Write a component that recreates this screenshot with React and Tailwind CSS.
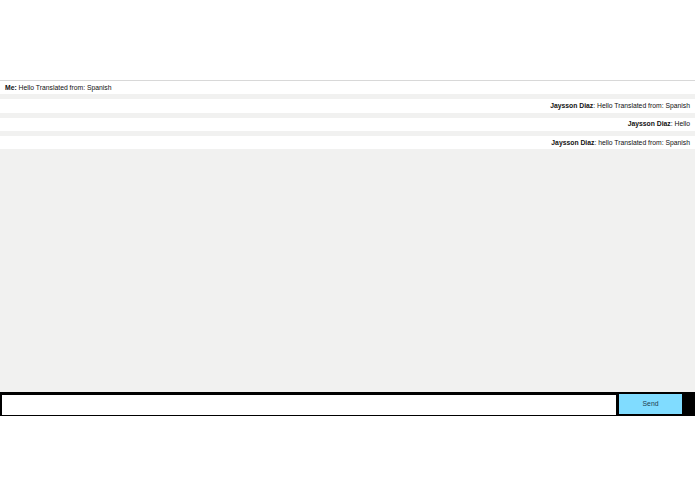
export default function App() {
  const messages = [
    { from: "Me:", text: " Hello Translated from: Spanish", mine: true },
    { from: "Jaysson Diaz", text: ": Hello Translated from: Spanish" },
    { from: "Jaysson Diaz", text: ": Hello" },
    { from: "Jaysson Diaz", text: ": hello Translated from: Spanish" },
  ];

  return (
    <div className="w-[695px] h-[494px] bg-white flex flex-col font-['Liberation_Sans',Arial,sans-serif] text-[#111]">
      <div className="h-[80px] shrink-0" />
      <div className="h-[312px] shrink-0 bg-[#f1f1f0] border-t border-[#d8d8d8] flex flex-col">
        {messages.map((m, i) => (
          <div
            key={i}
            className={
              "h-[13.33px] mb-[5px] pt-[1px] bg-white flex items-center text-[6.8px] leading-none px-[5px] " +
              (m.mine ? "justify-start" : "justify-end")
            }
          >
            <span>
              <b>{m.from}</b>
              {m.text}
            </span>
          </div>
        ))}
      </div>
      <div className="h-[24px] shrink-0 bg-black flex items-center">
        <input className="ml-[2px] mt-[1px] w-[614px] h-[20px] bg-white outline-none text-[8px] px-1" />
        <button className="ml-[3px] w-[63px] h-[20px] bg-[#80dcff] text-[6.8px] text-[#22404f]">
          Send
        </button>
      </div>
    </div>
  );
}
